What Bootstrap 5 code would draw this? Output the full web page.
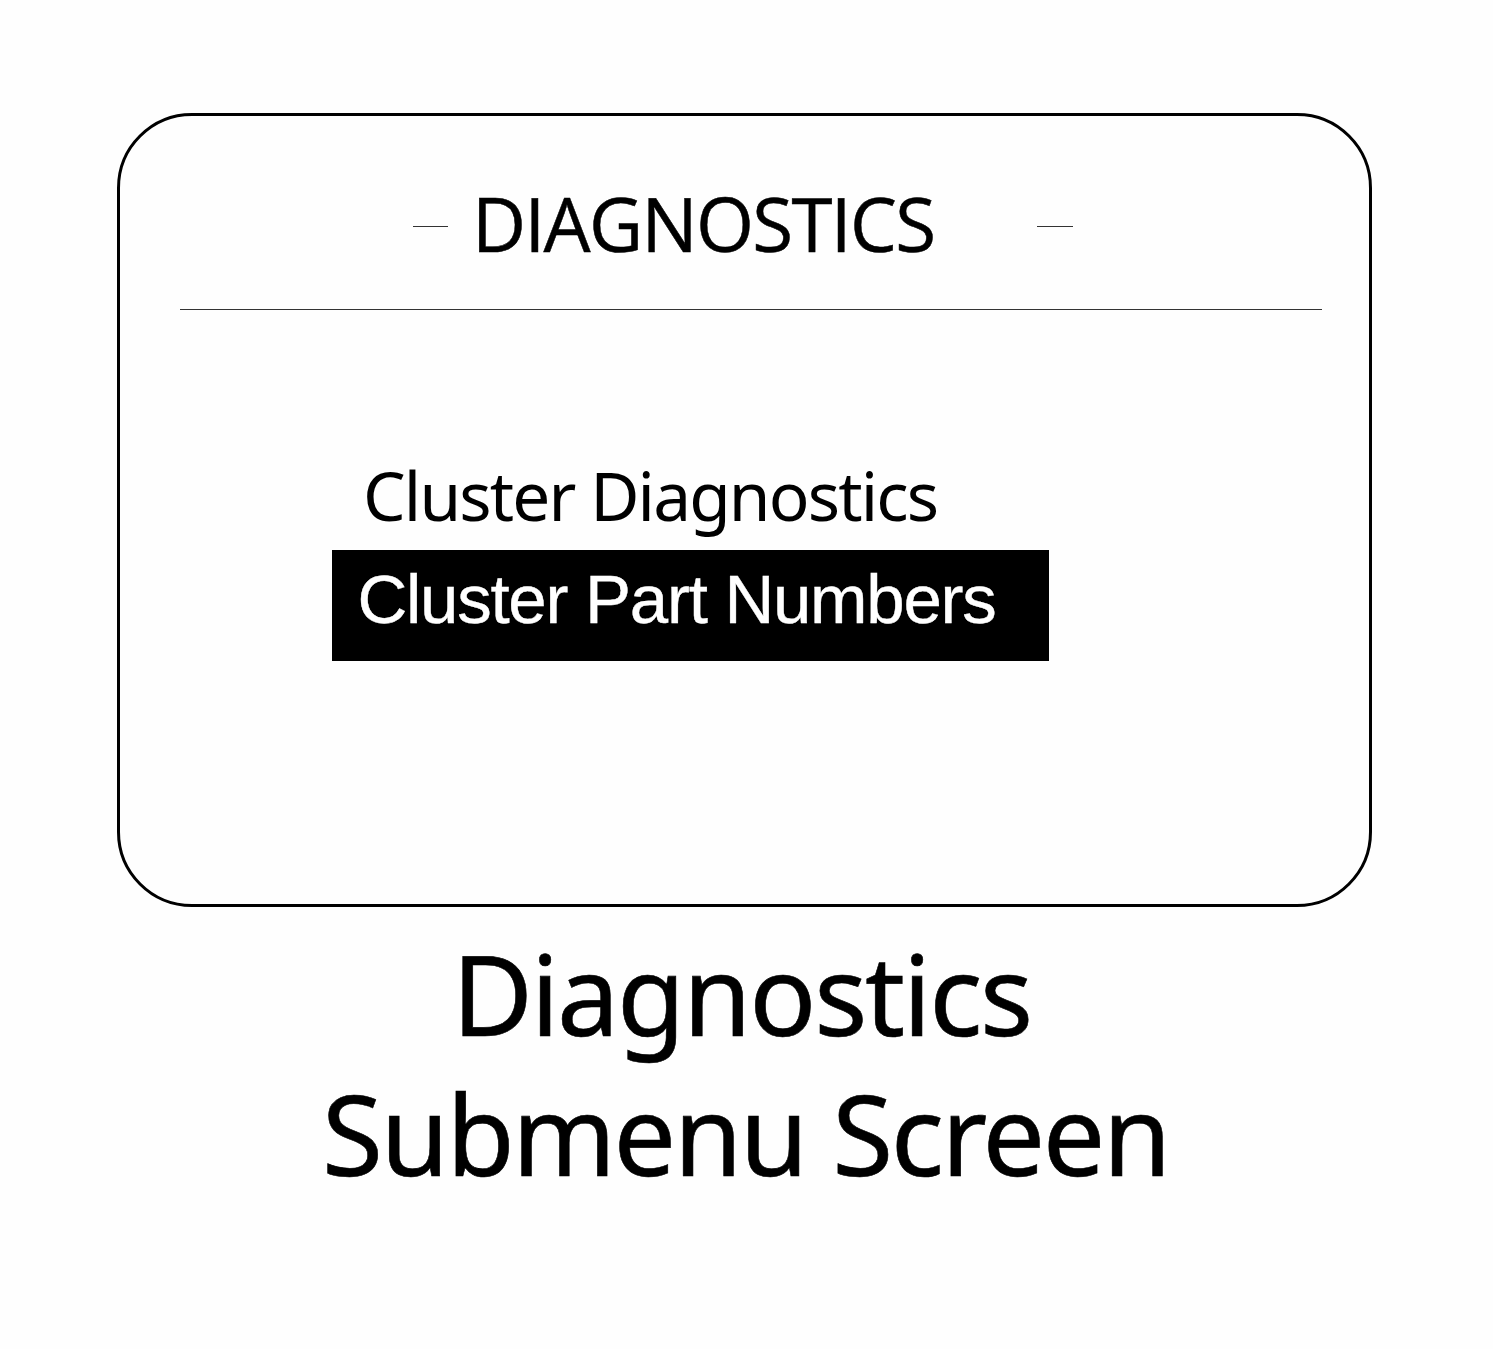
<!DOCTYPE html>
<html lang="en">
<head>
    <meta charset="UTF-8">
    <meta name="viewport" content="width=device-width, initial-scale=1.0">
    <title>Diagnostics Submenu Screen</title>
    <link href="https://cdn.jsdelivr.net/npm/bootstrap@5.3.0/dist/css/bootstrap.min.css" rel="stylesheet">
    <style>
        body {
            background-color: #fefefe;
            color: #000;
            font-family: "Noto Sans", sans-serif;
        }
        .page {
            width: 1493px;
            padding: 113px 121px 0 117px;
        }
        .screen {
            height: 794px;
            padding: 67px 47px 0 60px;
            border: 3px solid #000;
            border-radius: 75px;
        }
        .screen-header {
            height: 127px;
            padding-left: 233px;
            border-bottom: 1px solid #333;
        }
        .screen-title {
            width: 566px;
            margin-left: 24px;
            font-family: "Open Sans", sans-serif;
            font-size: 74.5px;
            font-weight: 400;
            line-height: 80px;
            letter-spacing: -1.65px;
            -webkit-text-stroke: .5px #000;
        }
        .dash {
            width: 35px;
            height: 1px;
            margin-top: 43px;
            background-color: #333;
        }
        .dash-end {
            width: 36px;
            margin-left: -1px;
        }
        .menu {
            width: 717px;
            margin: 145px 0 0 152px;
        }
        .menu-item {
            height: 95px;
            padding-left: 31px;
            font-size: 67.5px;
            line-height: 80px;
            letter-spacing: -1.85px;
        }
        .menu-item.selected {
            height: 111px;
            padding-left: 25.5px;
            background-color: #000;
            color: #fff;
            font-family: "Liberation Sans", Arial, sans-serif;
            font-size: 69px;
            line-height: 100px;
            letter-spacing: -1.27px;
            -webkit-text-stroke: .4px #fff;
        }
        .caption-title {
            padding-top: 16px;
            font-size: 111px;
            font-weight: 400;
            line-height: 140px;
            -webkit-text-stroke: .6px #000;
        }
        .caption-title span {
            display: block;
        }
        .line-one {
            padding-left: 335px;
            letter-spacing: -2.3px;
        }
        .line-two {
            padding-left: 205px;
            letter-spacing: -2.5px;
        }
    </style>
</head>
<body>
    <main class="page">
        <section class="screen">
            <header class="screen-header d-flex align-items-start">
                <div class="dash"></div>
                <h1 class="screen-title text-nowrap mb-0">DIAGNOSTICS</h1>
                <div class="dash dash-end"></div>
            </header>
            <ul class="menu list-unstyled mb-0 text-nowrap">
                <li class="menu-item">Cluster Diagnostics</li>
                <li class="menu-item selected">Cluster Part Numbers</li>
            </ul>
        </section>
        <h2 class="caption-title text-nowrap mb-0">
            <span class="line-one">Diagnostics</span>
            <span class="line-two">Submenu Screen</span>
        </h2>
    </main>
    <script src="https://cdn.jsdelivr.net/npm/bootstrap@5.3.0/dist/js/bootstrap.bundle.min.js"></script>
</body>
</html>
